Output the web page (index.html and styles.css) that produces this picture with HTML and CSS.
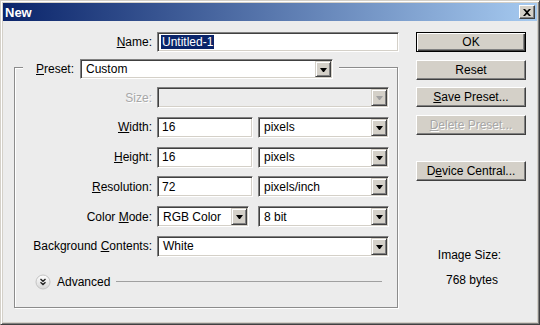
FILE: index.html
```html
<!DOCTYPE html>
<html lang="en">
<head>
  <meta charset="UTF-8" />
  <title>New</title>
  <link rel="stylesheet" href="styles.css">
</head>
<body>

  <div class="window">
    <div class="titlebar">
      <span class="title">New</span>
      <span class="close">
        <svg width="8" height="7" viewBox="0 0 8 7"><path d="M0 0h2l2 2 2-2h2L5 3.5 8 7H6L4 5 2 7H0l3-3.5z" fill="#000"/></svg>
      </span>
    </div>

    <div class="dialog">
      <div class="main">
        <div class="name-row">
          <span class="lbl"><u>N</u>ame:</span>
          <div class="field name-field"><span class="sel">Untitled-1</span></div>
        </div>

        <div class="group">
          <div class="group-head">
            <span><u>P</u>reset:</span>
            <div class="combo preset"><span class="val">Custom</span><span class="arrow"></span></div>
          </div>

          <div class="rows">
            <div class="row">
              <span class="lbl disabled">Size:</span>
              <div class="combo w232 off"><span class="val"></span><span class="arrow"></span></div>
            </div>
            <div class="row">
              <span class="lbl"><u>W</u>idth:</span>
              <div class="field w96">16</div>
              <div class="combo w131"><span class="val">pixels</span><span class="arrow"></span></div>
            </div>
            <div class="row">
              <span class="lbl"><u>H</u>eight:</span>
              <div class="field w96">16</div>
              <div class="combo w131"><span class="val">pixels</span><span class="arrow"></span></div>
            </div>
            <div class="row">
              <span class="lbl"><u>R</u>esolution:</span>
              <div class="field w96">72</div>
              <div class="combo w131"><span class="val">pixels/inch</span><span class="arrow"></span></div>
            </div>
            <div class="row">
              <span class="lbl">Color <u>M</u>ode:</span>
              <div class="combo w92"><span class="val">RGB Color</span><span class="arrow"></span></div>
              <div class="combo w131 push"><span class="val">8 bit</span><span class="arrow"></span></div>
            </div>
            <div class="row">
              <span class="lbl">Background <u>C</u>ontents:</span>
              <div class="combo w232"><span class="val">White</span><span class="arrow"></span></div>
            </div>
          </div>

          <div class="advanced">
            <svg width="16" height="16" viewBox="0 0 16 16">
              <defs>
                <linearGradient id="adv" x1="0" y1="0" x2="0" y2="1">
                  <stop offset="0" stop-color="#ffffff"/>
                  <stop offset="1" stop-color="#d6d6d6"/>
                </linearGradient>
              </defs>
              <circle cx="8" cy="8" r="7" fill="url(#adv)" stroke="#c4c4c4"/>
              <path d="M5.5 5l2.5 2.2 2.5-2.2M5.5 8.3l2.5 2.2 2.5-2.2" fill="none" stroke="#222" stroke-width="1.4"/>
            </svg>
            <span>Advanced</span>
            <span class="line"></span>
          </div>
        </div>
      </div>

      <div class="side">
        <button class="btn default">OK</button>
        <button class="btn">Reset</button>
        <button class="btn"><u>S</u>ave Preset...</button>
        <button class="btn off"><u>D</u>elete Preset...</button>
        <button class="btn gap">D<u>e</u>vice Central...</button>
        <div class="info">
          <div>Image Size:</div>
          <div class="bytes">768 bytes</div>
        </div>
      </div>
    </div>
  </div>

</body>
</html>
```

FILE: styles.css
```css
body {
  margin: 0;
  font-family: "Liberation Sans", Arial, sans-serif;
  font-size: 12px;
  color: #000;
}

.window {
  width: 540px;
  height: 325px;
  box-sizing: border-box;
  border: 1px solid;
  border-color: #d4d0c8 #404040 #404040 #d4d0c8;
  box-shadow: inset 1px 1px #fff, inset -1px -1px #808080;
  padding: 2px;
  background: #d4d0c8;
  display: flex;
  flex-direction: column;
}

/* Title bar */
.titlebar {
  height: 18px;
  flex-shrink: 0;
  background: linear-gradient(to right, #0a246a, #a6caf0);
  display: flex;
  align-items: center;
  justify-content: space-between;
  padding: 0 2px 0 2px;
}

.title {
  color: #fff;
  font-weight: bold;
  font-size: 13px;
}

.close {
  width: 16px;
  height: 14px;
  box-sizing: border-box;
  background: #d4d0c8;
  border: 1px solid;
  border-color: #fff #404040 #404040 #fff;
  box-shadow: inset -1px -1px #808080;
  display: flex;
  align-items: center;
  justify-content: center;
}

/* Dialog body */
.dialog {
  flex: 1;
  background: #ececec;
  display: flex;
  gap: 16px;
  padding: 11px 0 0 11px;
}

.main {
  width: 386px;
}

.name-row {
  display: flex;
  align-items: center;
  gap: 5px;
}

.name-row .lbl {
  width: 138px;
  text-align: right;
}

.field,
.combo {
  box-sizing: border-box;
  height: 21px;
  border: 1px solid;
  border-color: #808080 #fff #fff #808080;
  box-shadow: inset 1px 1px #404040, inset -1px -1px #d4d0c8;
  padding: 1px;
  background: #fff;
  display: flex;
  align-items: center;
}

.field {
  padding-left: 4px;
}

.name-field {
  width: 242px;
  height: 20px;
  padding-left: 3px;
}

.sel {
  background: #0a246a;
  color: #fff;
  padding: 0 1px;
}

.combo .val {
  flex: 1;
  padding-left: 4px;
  white-space: nowrap;
}

.combo .arrow {
  width: 16px;
  height: 17px;
  box-sizing: border-box;
  background: #d4d0c8;
  border: 1px solid;
  border-color: #d4d0c8 #404040 #404040 #d4d0c8;
  box-shadow: inset 1px 1px #fff, inset -1px -1px #808080;
  display: flex;
  align-items: center;
  justify-content: center;
}

.combo .arrow::after {
  content: "";
  width: 1px;
  height: 0;
  border-left: 3px solid transparent;
  border-right: 3px solid transparent;
  border-top: 4px solid #000;
  margin-top: 1px;
}

.combo.off {
  background: #ececec;
}

.combo.off .arrow::after {
  border-top-color: #a0a0a0;
}

.w96 { width: 96px; }
.w131 { width: 131px; }
.w232 { width: 232px; }
.w92 { width: 92px; }
.push { margin-left: 4px; }

/* Group box */
.group {
  margin-top: 15px;
  width: 384px;
  box-sizing: border-box;
  border: 1px solid #8c8c8c;
  box-shadow: inset 1px 1px #fff, 1px 1px #fff;
  padding-bottom: 17px;
}

.group-head {
  display: flex;
  align-items: center;
  gap: 6px;
  width: fit-content;
  margin: -9px 0 0 8px;
  padding: 0 6px 0 13px;
  background: #ececec;
}

.preset {
  width: 253px;
  height: 20px;
}

.preset .arrow {
  height: 16px;
}

.rows {
  display: flex;
  flex-direction: column;
  gap: 8.75px;
  margin-top: 8px;
}

.row {
  display: flex;
  align-items: center;
  gap: 5px;
}

.rows .lbl {
  width: 137px;
  text-align: right;
  white-space: nowrap;
}

.disabled {
  color: #a7a7a7;
  text-shadow: 1px 1px #fff;
}

.advanced {
  display: flex;
  align-items: center;
  gap: 6px;
  height: 16px;
  margin: 17px 15px 0 20px;
}

.advanced .line {
  flex: 1;
  height: 1px;
  background: #a0a0a0;
}

/* Buttons column */
.side {
  width: 110px;
  display: flex;
  flex-direction: column;
}

.btn {
  width: 110px;
  height: 20px;
  padding: 0;
  margin: 0 0 7.67px;
  font-family: "Liberation Sans", Arial, sans-serif;
  font-size: 12px;
  color: #000;
  background: #d4d0c8;
  border: 1px solid;
  border-color: #fff #404040 #404040 #fff;
  box-shadow: inset -1px -1px #808080;
}

.btn.default {
  border-color: #000;
  box-shadow: inset 1px 1px #fff, inset -1px -1px #404040, inset -2px -2px #808080;
}

.btn.off {
  color: #a7a7a7;
  text-shadow: 1px 1px #fff;
}

.btn.gap {
  margin-top: 18px;
}

.info {
  margin-top: 60px;
  text-align: center;
  line-height: 14px;
  padding-right: 3px;
}

.info .bytes {
  margin-top: 11px;
  padding-left: 5px;
}
```
